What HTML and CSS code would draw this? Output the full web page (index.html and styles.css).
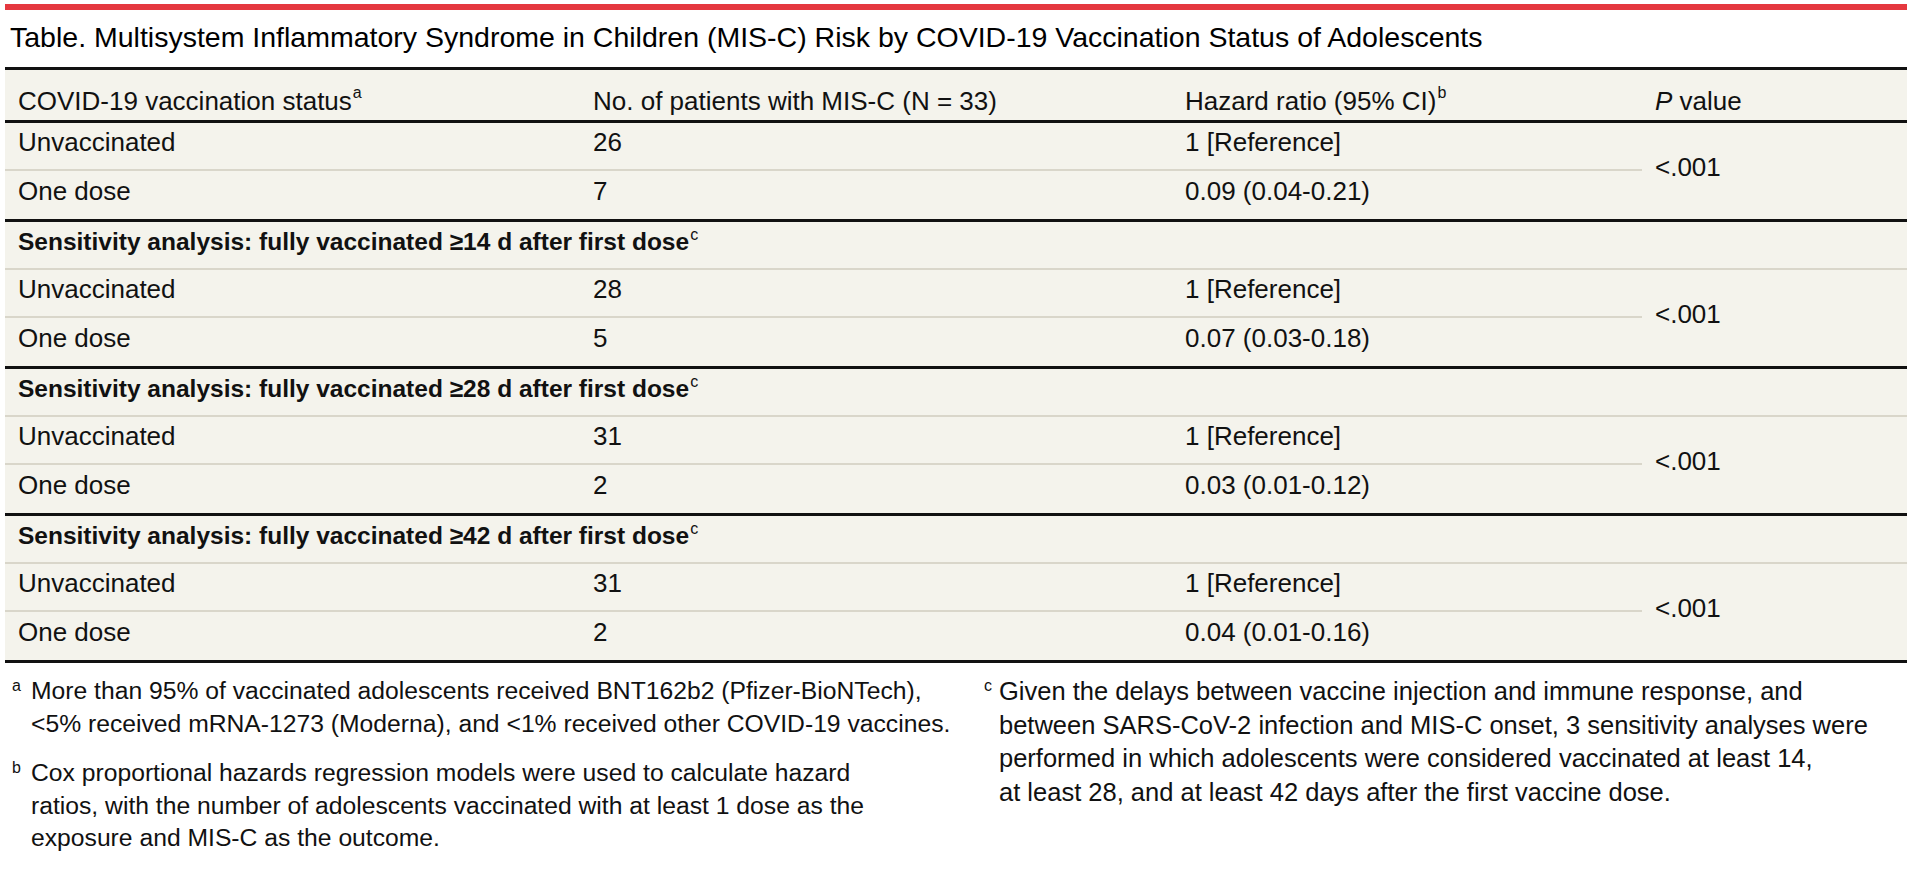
FILE: index.html
```html
<!DOCTYPE html>
<html lang="en">
<head>
<meta charset="utf-8">
<title>Table – MIS-C Risk by COVID-19 Vaccination Status</title>
<link rel="stylesheet" href="styles.css">
</head>
<body>
<div class="page">
  <div class="redbar"></div>
  <h1 class="title">Table. Multisystem Inflammatory Syndrome in Children (MIS-C) Risk by COVID-19 Vaccination Status of Adolescents</h1>

  <div class="tbl">
    <div class="head">
      <div class="cell"><span>COVID-19 vaccination status<sup>a</sup></span></div>
      <div class="cell"><span>No. of patients with MIS-C (N = 33)</span></div>
      <div class="cell"><span>Hazard ratio (95% CI)<sup>b</sup></span></div>
      <div class="cell"><span><i>P</i>&nbsp;value</span></div>
    </div>

    <div class="group first">
      <div class="cell r1">Unvaccinated</div>
      <div class="cell r1">26</div>
      <div class="cell r1">1 [Reference]</div>
      <div class="cell pval">&lt;.001</div>
      <div class="cell">One dose</div>
      <div class="cell">7</div>
      <div class="cell">0.09 (0.04-0.21)</div>
    </div>

    <div class="group">
      <div class="cell label"><span>Sensitivity analysis: fully vaccinated ≥14 d after first dose<sup>c</sup></span></div>
      <div class="cell r1">Unvaccinated</div>
      <div class="cell r1">28</div>
      <div class="cell r1">1 [Reference]</div>
      <div class="cell pval">&lt;.001</div>
      <div class="cell">One dose</div>
      <div class="cell">5</div>
      <div class="cell">0.07 (0.03-0.18)</div>
    </div>

    <div class="group">
      <div class="cell label"><span>Sensitivity analysis: fully vaccinated ≥28 d after first dose<sup>c</sup></span></div>
      <div class="cell r1">Unvaccinated</div>
      <div class="cell r1">31</div>
      <div class="cell r1">1 [Reference]</div>
      <div class="cell pval">&lt;.001</div>
      <div class="cell">One dose</div>
      <div class="cell">2</div>
      <div class="cell">0.03 (0.01-0.12)</div>
    </div>

    <div class="group last">
      <div class="cell label"><span>Sensitivity analysis: fully vaccinated ≥42 d after first dose<sup>c</sup></span></div>
      <div class="cell r1">Unvaccinated</div>
      <div class="cell r1">31</div>
      <div class="cell r1">1 [Reference]</div>
      <div class="cell pval">&lt;.001</div>
      <div class="cell">One dose</div>
      <div class="cell">2</div>
      <div class="cell">0.04 (0.01-0.16)</div>
    </div>
  </div>

  <div class="notes">
    <div class="col">
      <div class="note a">
        <span class="mark">a</span>
        <span class="text">More than 95% of vaccinated adolescents received BNT162b2 (Pfizer-BioNTech),<br>&lt;5% received mRNA-1273 (Moderna), and &lt;1% received other COVID-19 vaccines.</span>
      </div>
      <div class="note b">
        <span class="mark">b</span>
        <span class="text">Cox proportional hazards regression models were used to calculate hazard<br>ratios, with the number of adolescents vaccinated with at least 1 dose as the<br>exposure and MIS-C as the outcome.</span>
      </div>
    </div>
    <div class="col">
      <div class="note c">
        <span class="mark">c</span>
        <span class="text">Given the delays between vaccine injection and immune response, and<br>between SARS-CoV-2 infection and MIS-C onset, 3 sensitivity analyses were<br>performed in which adolescents were considered vaccinated at least 14,<br>at least 28, and at least 42 days after the first vaccine dose.</span>
      </div>
    </div>
  </div>
</div>
</body>
</html>
```

FILE: styles.css
```css
html, body {
  margin: 0;
  padding: 0;
  background: #ffffff;
}

body {
  font-family: "Liberation Sans", Arial, sans-serif;
  color: #111111;
}

.page {
  width: 1910px;
  height: 881px;
  overflow: hidden;
}

.redbar {
  margin: 4px 3px 0 5px;
  height: 6px;
  background: #e5383f;
}

.title {
  margin: 0;
  height: 57px;
  padding-left: 10px;
  padding-bottom: 3px;
  box-sizing: border-box;
  display: flex;
  align-items: center;
  font-size: 28.5px;
  font-weight: normal;
  white-space: nowrap;
  color: #000;
}

.tbl {
  margin-left: 5px;
  width: 1902px;
  background: #f4f3ec;
  font-size: 26px;
}

.head,
.group {
  display: grid;
  grid-template-columns: 575px 592px 470px 265px;
}

.head {
  height: 56px;
  box-sizing: border-box;
  border-top: 3px solid #111;
  border-bottom: 3px solid #111;
}

.group {
  grid-auto-rows: 48px;
  border-top: 3px solid #111;
}

.group.first {
  border-top: 0;
}

.group.last {
  border-bottom: 3px solid #111;
}

.cell {
  display: flex;
  align-items: center;
  padding-left: 13px;
  padding-bottom: 7px;
  box-sizing: border-box;
  white-space: nowrap;
}

.head .cell {
  padding-top: 12px;
  padding-bottom: 0;
}

.cell sup {
  font-size: 16px;
  line-height: 1;
  vertical-align: top;
  position: relative;
  top: -1px;
  margin-left: 1px;
}

.r1 {
  border-bottom: 2px solid #d9d6ca;
}

.label {
  grid-column: 1 / -1;
  border-bottom: 2px solid #d9d6ca;
  font-weight: bold;
  font-size: 24.5px;
}

.label sup {
  font-weight: normal;
}

.pval {
  grid-row: span 2;
}

.notes {
  display: grid;
  grid-template-columns: 972px 1fr;
  padding-left: 12px;
  margin-top: 12px;
  font-size: 24.7px;
  line-height: 32.5px;
}

.note {
  display: flex;
  align-items: flex-start;
}

.note.b {
  margin-top: 17px;
}

.mark {
  flex: none;
  width: 19px;
  font-size: 16px;
  line-height: 22px;
}

.note.c {
  font-size: 25.5px;
  line-height: 33.5px;
}

.note.c .mark {
  width: 15px;
}

.text {
  white-space: nowrap;
}
```
